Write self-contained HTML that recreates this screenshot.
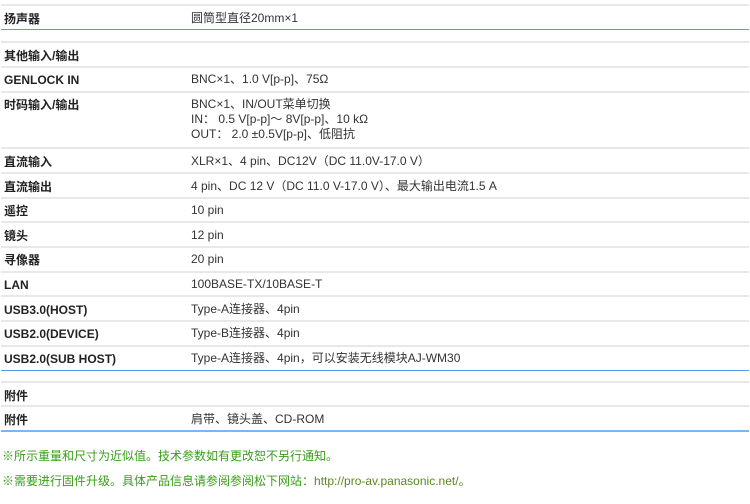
<!DOCTYPE html>
<html><head><meta charset="utf-8"><style>
body{margin:0;width:750px;height:504px;background:#fff;position:relative;overflow:hidden;font-family:"Liberation Sans","Noto Sans CJK SC",sans-serif;font-size:12px;color:#333}
.g{position:absolute;left:1px;width:748px;height:2px;background:#e8e8e8}
.b{position:absolute;left:1px;width:748px;height:2px;background:#4a9ff5}
.l{position:absolute;left:4px;font-weight:bold;color:#222;line-height:14px;margin-top:1px}
.v{position:absolute;left:191px;line-height:15px;color:#333;margin-top:1px}
.n{position:absolute;left:2px;color:#3a9c1a;line-height:14px;margin-top:1px}
</style></head><body>
<div class="g" style="top:4px"></div>
<div class="l" style="top:11px">扬声器</div><div class="v" style="top:10px">圆筒型直径20mm×1</div>
<div class="b" style="top:29px;height:1px"></div>
<div class="g" style="top:41px"></div>
<div class="l" style="top:48px">其他输入/输出</div>
<div class="g" style="top:66px"></div>
<div class="l" style="top:72px">GENLOCK IN</div><div class="v" style="top:71px">BNC×1、1.0 V[p-p]、75Ω</div>
<div class="g" style="top:91px"></div>
<div class="l" style="top:97px">时码输入/输出</div><div class="v" style="top:96px">BNC×1、IN/OUT菜单切换<br>IN： 0.5 V[p-p]～ 8V[p-p]、10 kΩ<br>OUT： 2.0 ±0.5V[p-p]、低阻抗</div>
<div class="g" style="top:147px"></div>
<div class="l" style="top:154px">直流输入</div><div class="v" style="top:153px">XLR×1、4 pin、DC12V（DC 11.0V-17.0 V）</div>
<div class="g" style="top:172px"></div>
<div class="l" style="top:179px">直流输出</div><div class="v" style="top:178px">4 pin、DC 12 V（DC 11.0 V-17.0 V）、最大输出电流1.5 A</div>
<div class="g" style="top:197px"></div>
<div class="l" style="top:203px">遥控</div><div class="v" style="top:202px">10 pin</div>
<div class="g" style="top:221px"></div>
<div class="l" style="top:228px">镜头</div><div class="v" style="top:227px">12 pin</div>
<div class="g" style="top:246px"></div>
<div class="l" style="top:252px">寻像器</div><div class="v" style="top:251px">20 pin</div>
<div class="g" style="top:271px"></div>
<div class="l" style="top:277px">LAN</div><div class="v" style="top:276px">100BASE-TX/10BASE-T</div>
<div class="g" style="top:295px"></div>
<div class="l" style="top:302px">USB3.0(HOST)</div><div class="v" style="top:301px">Type-A连接器、4pin</div>
<div class="g" style="top:320px"></div>
<div class="l" style="top:326px">USB2.0(DEVICE)</div><div class="v" style="top:325px">Type-B连接器、4pin</div>
<div class="g" style="top:345px"></div>
<div class="l" style="top:351px">USB2.0(SUB HOST)</div><div class="v" style="top:350px">Type-A连接器、4pin，可以安装无线模块AJ-WM30</div>
<div class="b" style="top:370px;height:1px"></div>
<div class="g" style="top:381px"></div>
<div class="l" style="top:388px">附件</div>
<div class="g" style="top:405px"></div>
<div class="l" style="top:412px">附件</div><div class="v" style="top:411px">肩带、镜头盖、CD-ROM</div>
<div class="b" style="top:430px;background:#7ab6f2"></div>
<div class="n" style="top:448px">※所示重量和尺寸为近似值。技术参数如有更改恕不另行通知。</div>
<div class="n" style="top:473px">※需要进行固件升级。具体产品信息请参阅参阅松下网站：<span style="color:#5a8a1a">http://pro-av.panasonic.net/</span>。</div>
</body></html>
